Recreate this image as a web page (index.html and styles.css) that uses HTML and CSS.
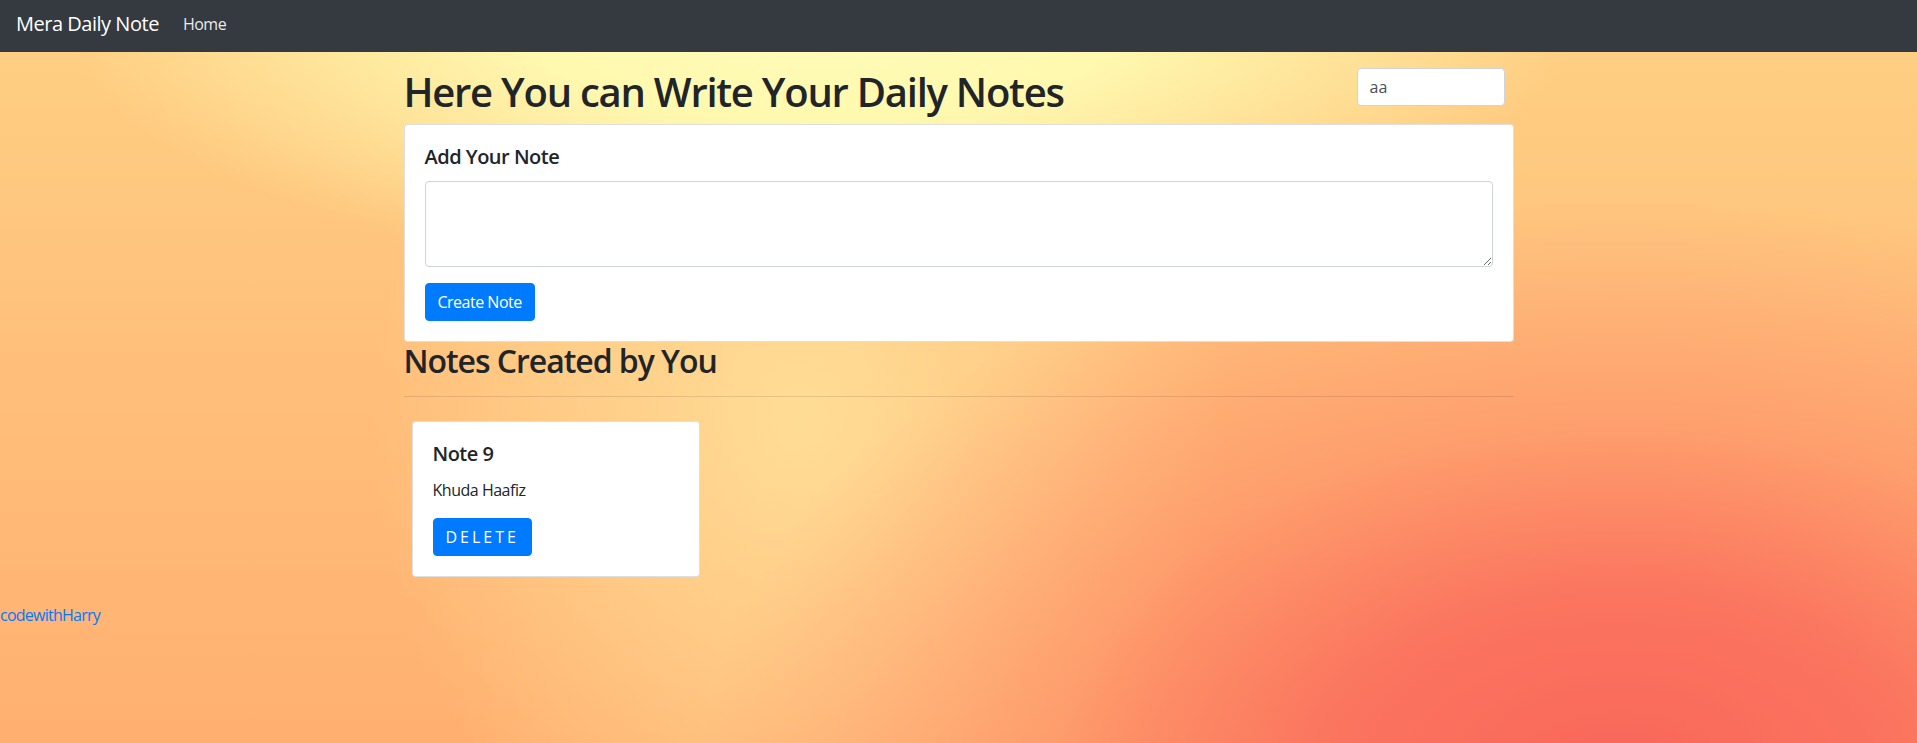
FILE: index.html
```html
<!DOCTYPE html>
<html lang="en">
<head>
<meta charset="utf-8">
<title>Mera Daily Note</title>
<link rel="stylesheet" href="styles.css">
</head>
<body>
<div class="page">
  <nav class="navbar">
    <a class="brand" href="#">Mera Daily Note</a>
    <a class="nav-link" href="#">Home</a>
  </nav>
  <main class="container">
    <div class="head-row">
      <h1 class="title">Here You can Write Your Daily Notes</h1>
      <input class="search" type="search" value="aa">
    </div>
    <section class="card">
      <div class="card-body">
        <h5 class="card-title">Add Your Note</h5>
        <textarea class="note-input" rows="3"></textarea>
        <button class="btn btn-create">Create Note</button>
      </div>
    </section>
    <h2 class="section-title">Notes Created by You</h2>
    <hr class="divider">
    <div class="notes">
      <div class="card note-card">
        <div class="card-body">
          <h5 class="card-title">Note 9</h5>
          <p class="card-text">Khuda Haafiz</p>
          <button class="btn btn-delete">DELETE</button>
        </div>
      </div>
    </div>
  </main>
  <a class="footer-link" href="#">codewithHarry</a>
</div>
</body>
</html>
```

FILE: styles.css
```css
* { box-sizing: border-box; }

html, body {
  margin: 0;
  padding: 0;
}

body {
  font-family: "Open Sans", "Noto Sans", sans-serif;
  font-size: 16px;
  line-height: 1.5;
  color: #212529;
  letter-spacing: -0.03em;
}

.page {
  min-height: 100vh;
  background-color: #ffbc78;
  background-image:
    radial-gradient(ellipse 920px 580px at 1620px 780px, rgba(249,102,90,1) 0%, rgba(250,108,92,0.88) 32%, rgba(252,125,96,0.45) 62%, rgba(255,150,105,0) 100%),
    radial-gradient(ellipse 760px 270px at 820px 10px, #fffcb8 0%, rgba(255,251,178,0.95) 40%, rgba(255,240,160,0) 100%),
    radial-gradient(ellipse 430px 520px at 800px 420px, rgba(255,224,152,0.9) 0%, rgba(255,222,150,0.45) 55%, rgba(255,220,150,0) 100%),
    linear-gradient(180deg, #fed184 0%, #ffbf7b 50%, #ffb071 100%);
  overflow: hidden;
}

/* navbar */
.navbar {
  height: 52px;
  background: #343a40;
  display: flex;
  align-items: center;
  padding: 0 16px 4px;
}

.brand {
  color: #fff;
  font-size: 20px;
  line-height: 30px;
  text-decoration: none;
  margin-right: 16px;
  white-space: nowrap;
}

.nav-link {
  color: rgba(255,255,255,0.92);
  font-size: 16px;
  line-height: 24px;
  padding: 0 8px;
  text-decoration: none;
}

/* main */
.container {
  width: 1110px;
  margin: 16px auto 0;
}

.head-row {
  display: flex;
  justify-content: space-between;
  align-items: flex-start;
  margin-bottom: 8px;
}

.title {
  margin: 0;
  font-size: 40px;
  line-height: 48px;
  font-weight: 600;
  letter-spacing: -1.25px;
}

.search {
  width: 148px;
  height: 38px;
  margin-right: 9px;
  padding: 6px 12px;
  font: inherit;
  font-size: 16px;
  color: #495057;
  background: #fff;
  border: 1px solid #ced4da;
  border-radius: 4px;
  outline: none;
  -webkit-appearance: none;
  appearance: none;
}

.card {
  background: #fff;
  border: 1px solid rgba(0,0,0,0.125);
  border-radius: 4px;
}

.card-body {
  padding: 20px;
}

.card-title {
  margin: 0 0 12px;
  font-size: 20px;
  line-height: 24px;
  font-weight: 600;
  letter-spacing: -0.5px;
}

.note-input {
  display: block;
  width: 100%;
  height: 86px;
  margin: 0 0 16px;
  padding: 6px 12px;
  font: inherit;
  color: #495057;
  border: 1px solid #ced4da;
  border-radius: 4px;
  background: #fff;
}

.btn {
  display: inline-block;
  height: 38px;
  padding: 6px 12px;
  font: inherit;
  font-size: 16px;
  line-height: 24px;
  color: #fff;
  background: #007bff;
  border: 1px solid #007bff;
  border-radius: 4px;
  cursor: pointer;
}

.btn-create {
  letter-spacing: -0.5px;
}

.section-title {
  margin: 0;
  font-size: 32px;
  line-height: 38px;
  font-weight: 600;
  letter-spacing: -1.05px;
}

.divider {
  margin: 16px 0;
  border: 0;
  border-top: 1px solid rgba(0,0,0,0.1);
  height: 0;
}

.notes {
  display: flex;
  flex-wrap: wrap;
}

.note-card {
  width: 288px;
  margin: 8px;
}

.card-text {
  margin: 0 0 16px;
  font-size: 16px;
  line-height: 24px;
}

.btn-delete {
  letter-spacing: 3px;
}

.footer-link {
  display: inline-block;
  margin-top: 18px;
  color: #007bff;
  text-decoration: none;
  font-size: 16px;
  line-height: 24px;
  letter-spacing: -0.75px;
}
```
